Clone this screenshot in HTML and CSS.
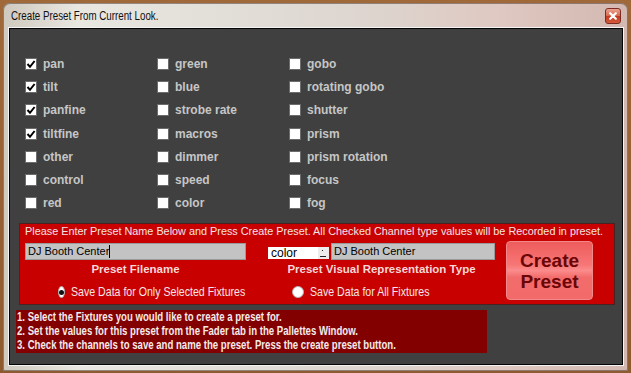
FILE: index.html
```html
<!DOCTYPE html>
<html>
<head>
<meta charset="utf-8">
<link rel="stylesheet" href="styles.css">
</head>
<body>
<div class="window">
  <div class="titlebar">
    <span class="title">Create Preset From Current Look.</span>
    <span class="close"><svg width="8" height="8" viewBox="0 0 8 8"><path d="M1.2 1.2 L6.8 6.8 M6.8 1.2 L1.2 6.8" stroke="#fff" stroke-width="2.2" stroke-linecap="round"/></svg></span>
  </div>
  <div class="client">
    <div class="channels">
      <label class="chan"><span class="cb on"><svg width="10" height="10" viewBox="0 0 10 10"><path d="M1.5 5 L4 7.8 L8.6 2" fill="none" stroke="#000" stroke-width="2"/></svg></span>pan</label>
      <label class="chan"><span class="cb on"><svg width="10" height="10" viewBox="0 0 10 10"><path d="M1.5 5 L4 7.8 L8.6 2" fill="none" stroke="#000" stroke-width="2"/></svg></span>tilt</label>
      <label class="chan"><span class="cb on"><svg width="10" height="10" viewBox="0 0 10 10"><path d="M1.5 5 L4 7.8 L8.6 2" fill="none" stroke="#000" stroke-width="2"/></svg></span>panfine</label>
      <label class="chan"><span class="cb on"><svg width="10" height="10" viewBox="0 0 10 10"><path d="M1.5 5 L4 7.8 L8.6 2" fill="none" stroke="#000" stroke-width="2"/></svg></span>tiltfine</label>
      <label class="chan"><span class="cb"></span>other</label>
      <label class="chan"><span class="cb"></span>control</label>
      <label class="chan"><span class="cb"></span>red</label>
      <label class="chan"><span class="cb"></span>green</label>
      <label class="chan"><span class="cb"></span>blue</label>
      <label class="chan"><span class="cb"></span>strobe rate</label>
      <label class="chan"><span class="cb"></span>macros</label>
      <label class="chan"><span class="cb"></span>dimmer</label>
      <label class="chan"><span class="cb"></span>speed</label>
      <label class="chan"><span class="cb"></span>color</label>
      <label class="chan"><span class="cb"></span>gobo</label>
      <label class="chan"><span class="cb"></span>rotating gobo</label>
      <label class="chan"><span class="cb"></span>shutter</label>
      <label class="chan"><span class="cb"></span>prism</label>
      <label class="chan"><span class="cb"></span>prism rotation</label>
      <label class="chan"><span class="cb"></span>focus</label>
      <label class="chan"><span class="cb"></span>fog</label>
    </div>

    <div class="panel">
      <div class="panel-head">Please Enter Preset Name Below and Press Create Preset. All Checked Channel type values will be Recorded in preset.</div>
      <div class="panel-body">
        <div class="fields">
          <div class="field-a"><div class="textbox">DJ Booth Center<span class="caret"></span></div></div>
          <div class="field-b">
            <div class="combo"><span class="combo-text">color</span><span class="combo-btn"><svg width="9" height="9" viewBox="0 0 9 9"><rect x="3" y="1" width="1" height="1" fill="#222"/><rect x="1" y="7" width="6" height="1" fill="#222"/></svg></span></div>
            <div class="textbox small">DJ Booth Center</div>
          </div>
          <div class="cap">Preset Filename</div>
          <div class="cap">Preset Visual Representation Type</div>
          <div class="radio-a"><span class="radio on"></span><span class="rlabel">Save Data for Only Selected Fixtures</span></div>
          <div class="radio-b"><span class="radio"></span><span class="rlabel">Save Data for All Fixtures</span></div>
        </div>
        <div class="create">Create<br>Preset</div>
      </div>
    </div>

    <div class="steps">
      <div class="step">1. Select the Fixtures you would like to create a preset for.</div>
      <div class="step">2. Set the values for this preset from the Fader tab in the Pallettes Window.</div>
      <div class="step">3. Check the channels to save and name the preset. Press the create preset button.</div>
    </div>
  </div>
</div>
</body>
</html>
```

FILE: styles.css
```css
html, body {
  margin: 0;
  padding: 0;
}
body {
  width: 631px;
  height: 373px;
  overflow: hidden;
  background: linear-gradient(180deg, #a0693a 0%, #8e5a30 100%);
  font-family: "Liberation Sans", Arial, sans-serif;
}
.window {
  width: 614px;
  height: 362px;
  margin: 3px 0 0 3px;
  padding: 0 5px 6px 6px;
  border-radius: 7px 7px 2px 2px;
  background: linear-gradient(90deg, #cfc9be 0%, #e9e7e1 12%, #e2dfd8 35%, #ddd4ce 60%, #dfc8c1 80%, #d2b8b1 100%);
  box-shadow: inset 0 0 0 1px rgba(80,60,50,.55);
  display: flex;
  flex-direction: column;
}
.titlebar {
  height: 25px;
  display: flex;
  align-items: center;
  justify-content: space-between;
}
.title {
  display: inline-block;
  margin-left: 2px;
  margin-top: 1px;
  font-size: 12.5px;
  color: #111;
  white-space: nowrap;
  transform: scaleX(0.78);
  transform-origin: left center;
}
.close {
  width: 14px;
  height: 14px;
  margin-right: 2px;
  border: 1px solid #7a2c20;
  border-radius: 3px;
  background: linear-gradient(180deg, #eaa292 0%, #d9694f 48%, #c23a20 52%, #d65a3c 100%);
  display: flex;
  align-items: center;
  justify-content: center;
}
.client {
  flex: 1;
  background: #404040;
  border: 1px solid #050505;
  box-shadow: 0 0 0 1px #f4f4f4;
  display: flex;
  flex-direction: column;
}
.channels {
  margin: 23px 0 0 15px;
  display: grid;
  grid-template-columns: 132px 132px 132px;
  grid-template-rows: repeat(7, 23.3px);
  grid-auto-flow: column;
}
.chan {
  display: flex;
  align-items: center;
  gap: 6px;
  font-weight: bold;
  font-size: 12px;
  color: #c6c6c6;
}
.cb {
  width: 10px;
  height: 10px;
  border: 1px solid #6c6c6c;
  background: #fff;
  display: flex;
  align-items: center;
  justify-content: center;
}
.panel {
  margin: 8px 0 0 9px;
  width: 594px;
  height: 80px;
  border: 1px solid #4a2222;
  background: #c80000;
  display: flex;
  flex-direction: column;
}
.panel-head {
  padding-left: 5px;
  padding-top: 1px;
  font-size: 10.85px;
  line-height: 13px;
  color: #f3e4e4;
  white-space: nowrap;
}
.panel-body {
  display: flex;
  padding-left: 5px;
}
.fields {
  margin-top: 5px;
  display: grid;
  grid-template-columns: 221px 227px;
  column-gap: 22px;
  grid-template-rows: 17px 17px 22px;
}
.field-b {
  display: flex;
  align-items: center;
}
.textbox {
  height: 17px;
  box-sizing: border-box;
  background: #c3c3c3;
  border: 1px solid #9a9a9a;
  font-size: 11px;
  line-height: 15px;
  padding-left: 2px;
  color: #000;
  display: flex;
  align-items: center;
}
.textbox.small {
  width: 164px;
  margin-left: 2px;
}
.caret {
  width: 1px;
  height: 13px;
  background: #000;
}
.combo {
  width: 61px;
  height: 12px;
  background: #fff;
  display: flex;
  align-items: center;
  justify-content: space-between;
  margin-top: 3px;
}
.combo-text {
  font-size: 12px;
  padding-left: 3px;
  color: #000;
}
.combo-btn {
  width: 11px;
  height: 12px;
  background: #ececec;
  display: flex;
  align-items: center;
  justify-content: center;
}
.cap {
  text-align: center;
  font-weight: bold;
  font-size: 11.5px;
  line-height: 17px;
  color: #f6d8d8;
  padding-top: 1px;
  white-space: nowrap;
}
.radio-a, .radio-b {
  display: flex;
  align-items: flex-end;
  gap: 6px;
  white-space: nowrap;
}
.rlabel {
  display: inline-block;
  font-size: 13px;
  line-height: 15px;
  color: #f4e6e6;
  transform: scaleX(0.815);
  transform-origin: left center;
}
.radio-a { padding-left: 33px; }
.radio-b { padding-left: 24px; }
.radio {
  width: 12px;
  height: 12px;
  box-sizing: border-box;
  border-radius: 50%;
  background: #fff;
  border: 1px solid #b0b0b0;
  margin-bottom: 1px;
  display: flex;
  align-items: center;
  justify-content: center;
}
.radio.on::after {
  content: "";
  width: 5px;
  height: 5px;
  border-radius: 50%;
  background: #111;
}
.create {
  margin: 3px 0 0 11px;
  width: 85px;
  height: 57px;
  border: 1px solid #f08a8a;
  border-radius: 4px;
  background: linear-gradient(180deg, #ee5c5c 0%, #f87676 40%, #fb8c8c 50%, #f36c6c 62%, #f26a6a 100%);
  color: #6a0606;
  font-weight: bold;
  font-size: 19px;
  line-height: 21px;
  text-align: center;
  display: flex;
  align-items: center;
  justify-content: center;
}
.steps {
  margin: 5px 0 0 6px;
  width: 471px;
  height: 43px;
  background: #820000;
  padding-left: 1px;
  box-sizing: border-box;
}
.step {
  font-weight: bold;
  font-size: 12px;
  line-height: 14px;
  color: #f4eaea;
  white-space: nowrap;
  transform: scaleX(0.8);
  transform-origin: left center;
}
```
